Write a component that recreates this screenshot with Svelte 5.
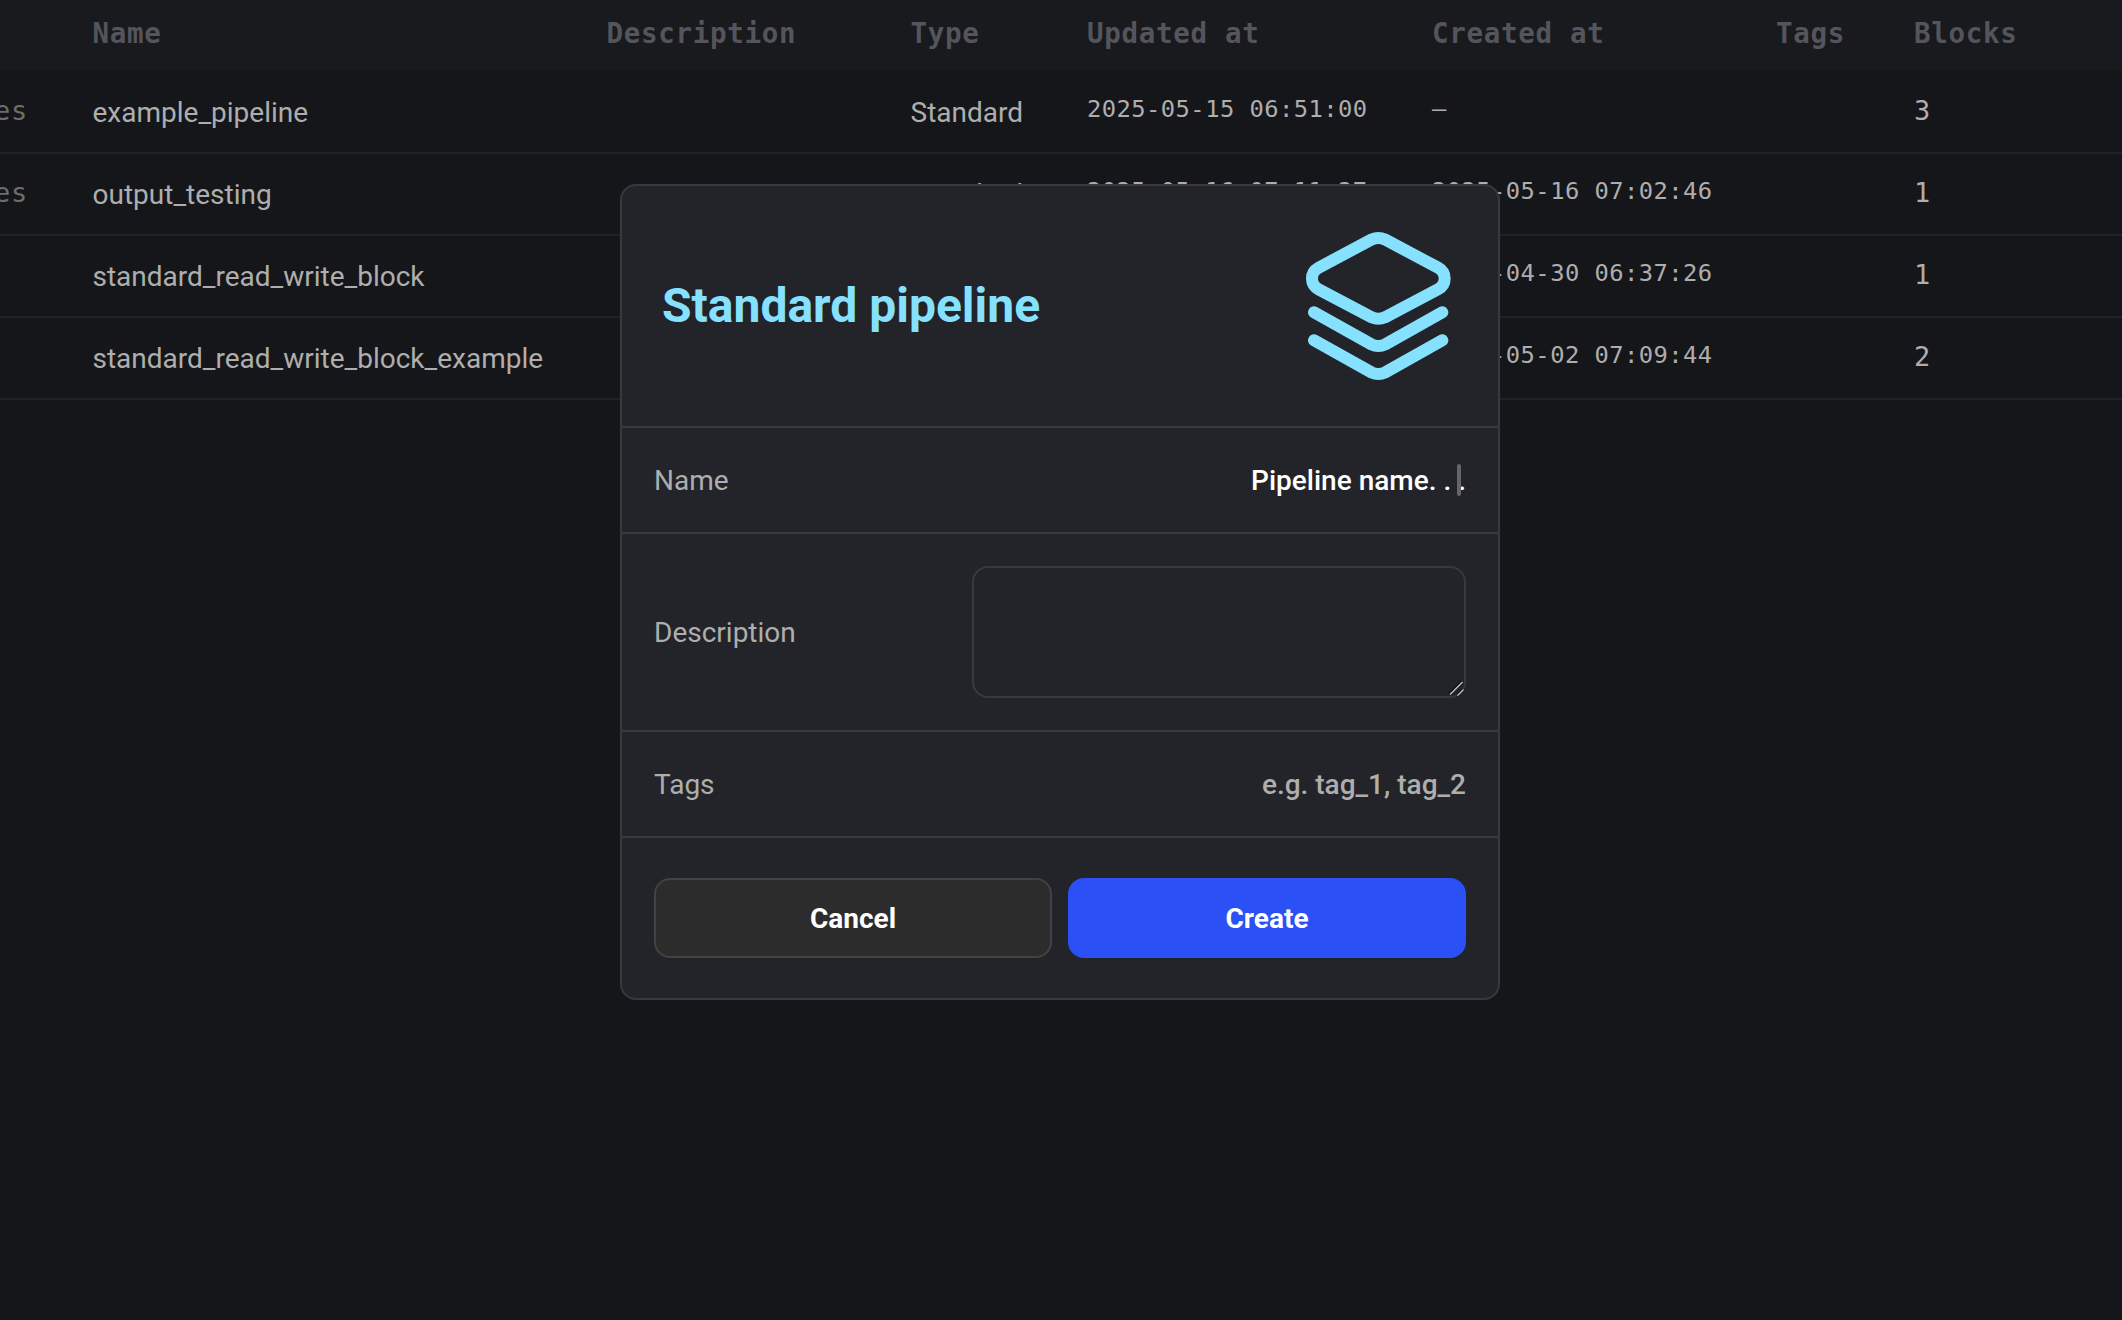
<script>
  const columns = ['', 'Name', 'Description', 'Type', 'Updated at', 'Created at', 'Tags', 'Blocks'];
  const rows = [
    { action: 'es', name: 'example_pipeline', updated: '2025-05-15 06:51:00', created: '—', blocks: 3 },
    { action: 'es', name: 'output_testing', updated: '2025-05-16 07:11:37', created: '2025-05-16 07:02:46', blocks: 1 },
    { action: '', name: 'standard_read_write_block', updated: '2025-04-30 06:37:26', created: '2025-04-30 06:37:26', blocks: 1 },
    { action: '', name: 'standard_read_write_block_example', updated: '2025-05-02 07:09:44', created: '2025-05-02 07:09:44', blocks: 2 }
  ];
</script>

<main class="page">
  <div class="table">
    <div class="row head">
      {#each columns as column}
        <span>{column}</span>
      {/each}
    </div>
    {#each rows as row}
      <div class="row">
        <span class="mono action">{row.action}</span>
        <span>{row.name}</span>
        <span></span>
        <span>Standard</span>
        <span class="mono date">{row.updated}</span>
        <span class="mono date">{row.created}</span>
        <span></span>
        <span class="mono">{row.blocks}</span>
      </div>
    {/each}
  </div>

  <section class="modal">
    <header class="title">
      <h1>Standard pipeline</h1>
      <svg viewBox="60 48 480 480" fill="none" stroke="#86e1fe" stroke-width="36" stroke-linecap="round">
        <path d="M275 88.500Q295 79.500 315 88.500L474 173Q494 184 494 205.500Q494 227 474 238L315 322Q295 331 275 322L116 238Q96 227 96 205.500Q96 184 116 173Z" />
        <path d="M102 307L274 403Q295 413 316 403L487 307" />
        <path d="M102 391L274 487Q295 497 316 487L487 391" />
      </svg>
    </header>
    <div class="field">
      <span>Name</span>
      <span class="value name">Pipeline name. . .<i class="caret"></i></span>
    </div>
    <div class="field tall">
      <span>Description</span>
      <div class="area">
        <svg class="grip" viewBox="0 0 16 16" fill="none">
          <path d="M1 13.500L13.500 1M9 14.500L14.500 9" stroke="#0d0e10" stroke-width="1.500" />
          <path d="M2 14.500L14.500 2M9.500 15.500L15.500 9.500" stroke="#c2c2c2" stroke-width="1.300" />
        </svg>
      </div>
    </div>
    <div class="field">
      <span>Tags</span>
      <span class="value">e.g. tag_1, tag_2</span>
    </div>
    <footer class="actions">
      <button class="cancel">Cancel</button>
      <button class="create">Create</button>
    </footer>
  </section>
</main>

<style>
  .page {
    position: relative;
    width: 2122px;
    height: 1320px;
    overflow: hidden;
    background: #151619;
    color: #aeaeae;
    font: 28px/34px Roboto, sans-serif;
  }
  .row {
    display: grid;
    grid-template-columns: 92.500px 514px 304px 176.500px 345px 344px 138px 1fr;
    align-items: center;
    box-sizing: border-box;
    height: 82px;
    padding-top: 2px;
    border-bottom: 2px solid #212225;
    white-space: pre;
  }
  .head {
    height: 72px;
    padding: 0 0 4px;
    background: #191a1e;
    border-color: #161717;
    color: #54555c;
    font: bold 27.500px/34px "DejaVu Sans Mono", monospace;
    letter-spacing: 0.7px;
  }
  .mono {
    font-family: "DejaVu Sans Mono", monospace;
    font-size: 27px;
    padding-bottom: 4px;
  }
  .date {
    font-size: 23.800px;
    letter-spacing: 0.440px;
    padding-bottom: 8px;
  }
  .action {
    color: #6c6e6c;
    margin-left: -6px;
    letter-spacing: 0.8px;
  }
  .modal {
    position: absolute;
    left: 620px;
    top: 184px;
    box-sizing: border-box;
    width: 880px;
    height: 816px;
    display: flex;
    flex-direction: column;
    background: #232429;
    border: 2px solid #38393d;
    border-radius: 16px;
  }
  .title {
    display: flex;
    align-items: center;
    justify-content: space-between;
    height: 240px;
    padding: 0 38px 0 40px;
    border-bottom: 2px solid #38393d;
  }
  .title svg {
    width: 160px;
    height: 160px;
  }
  h1 {
    margin: 0;
    color: #86e1fe;
    font-size: 48px;
    font-weight: 700;
    line-height: 56px;
  }
  .field {
    display: flex;
    align-items: center;
    justify-content: space-between;
    height: 104px;
    padding: 0 32px;
    border-bottom: 2px solid #38393d;
  }
  .field > span {
    padding-top: 2px;
  }
  .tall {
    height: 196px;
  }
  .value {
    position: relative;
    font-weight: 500;
  }
  .name {
    color: #fff;
  }
  .caret {
    position: absolute;
    right: 5px;
    top: 2px;
    width: 4px;
    height: 32px;
    border-radius: 2px;
    background: #646568;
  }
  .area {
    display: flex;
    align-items: flex-end;
    justify-content: flex-end;
    box-sizing: border-box;
    width: 494px;
    height: 132px;
    border: 2px solid #38393d;
    border-radius: 16px;
  }
  .grip {
    width: 16px;
    height: 16px;
  }
  .actions {
    display: flex;
    gap: 16px;
    padding: 40px 32px;
  }
  button {
    flex: 1;
    height: 80px;
    padding: 2px 0 0;
    border: 2px solid #424242;
    border-radius: 16px;
    background: #2c2c2c;
    color: #fff;
    font: bold 28px/34px Roboto, sans-serif;
  }
  .create {
    border-color: #2a50f6;
    background: #2a50f6;
  }
</style>
